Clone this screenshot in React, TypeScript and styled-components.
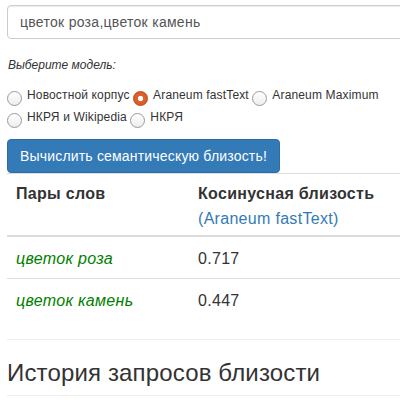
import React from "react";
import styled, { createGlobalStyle } from "styled-components";

const Global = createGlobalStyle`
  html, body { margin: 0; padding: 0; overflow: hidden; background: #fff; }
  body {
    font-family: "Liberation Sans", Arial, Helvetica, sans-serif;
    font-size: 14px;
    line-height: 1.42857;
    color: #333;
  }
  * { box-sizing: border-box; }
`;

const Page = styled.div`
  width: 440px;
  padding: 5px 0 0 7px;
`;

const TextInput = styled.input`
  display: block;
  width: 100%;
  height: 34px;
  padding: 6px 12px;
  font-family: inherit;
  font-size: 14px;
  letter-spacing: 0.28px;
  line-height: 20px;
  color: #555;
  background: #fff;
  border: 1px solid #ccc;
  border-radius: 4px;
  box-shadow: inset 0 1px 1px rgba(0, 0, 0, 0.075);
  outline: none;
`;

const Hint = styled.div`
  margin-top: 18px;
  padding-left: 1px;
  font-size: 12px;
  line-height: 17px;
  font-style: italic;
  color: #333;
`;

const RadioGroup = styled.div`
  margin-top: 10px;
  font-size: 12px;
  line-height: 22px;
  letter-spacing: 0.15px;
`;

const Option = styled.label`
  white-space: nowrap;
  color: #333;
`;

const Radio = styled.span<{ $checked?: boolean }>`
  display: inline-block;
  width: 15px;
  height: 15px;
  margin: 0 5px 0 0;
  vertical-align: -7px;
  border-radius: 50%;
  border: 1px solid ${(p) => (p.$checked ? "#b9481b" : "#9a9a9a")};
  background: ${(p) =>
    p.$checked
      ? "radial-gradient(circle at 50% 50%, #fff 0 2.3px, #e3612c 3px, #d45522 100%)"
      : "linear-gradient(#ffffff, #ededed)"};
`;

const Button = styled.button`
  display: block;
  margin-top: 11px;
  height: 34px;
  padding: 6px 12px;
  font-family: inherit;
  font-size: 14px;
  letter-spacing: 0.18px;
  line-height: 20px;
  color: #fff;
  background: #337ab7;
  border: 1px solid #2e6da4;
  border-radius: 4px;
`;

const Table = styled.table`
  width: 100%;
  border-collapse: collapse;
  font-size: 16px;
  line-height: 23px;
  letter-spacing: 0.3px;
  margin-bottom: 19px;
`;

const Th = styled.th<{ $w?: number }>`
  text-align: left;
  vertical-align: top;
  font-weight: bold;
  padding: 8px 8px 5px 9px;
  border-top: 1px solid #ddd;
  border-bottom: 2px solid #ddd;
  width: ${(p) => (p.$w ? `${p.$w}px` : "auto")};
`;

const Sub = styled.span`
  display: block;
  margin-top: 2px;
  font-weight: normal;
  color: #337ab7;
`;

const Td = styled.td<{ $pair?: boolean }>`
  padding: 10px 8px 8px 9px;
  border-bottom: 1px solid #ddd;
  vertical-align: top;
  color: ${(p) => (p.$pair ? "#008000" : "#333")};
  font-style: ${(p) => (p.$pair ? "italic" : "normal")};
`;

const LastTd = styled(Td)`
  border-bottom: none;
`;

const Rule = styled.hr`
  margin: 0;
  border: 0;
  border-top: 1px solid #eee;
`;

const Heading = styled.h3`
  margin: 20px 0 0 0;
  padding-bottom: 9px;
  font-size: 24px;
  letter-spacing: 0.15px;
  line-height: 26px;
  font-weight: 400;
  color: #333;
  border-bottom: 1px solid #eee;
`;

const models = [
  { name: "Новостной корпус", checked: false },
  { name: "Araneum fastText", checked: true },
  { name: "Araneum Maximum", checked: false },
  { name: "НКРЯ и Wikipedia", checked: false },
  { name: "НКРЯ", checked: false },
];

const rows = [
  { pair: "цветок роза", value: "0.717" },
  { pair: "цветок камень", value: "0.447" },
];

export default function App() {
  return (
    <>
      <Global />
      <Page>
        <TextInput defaultValue="цветок роза,цветок камень" />
        <Hint>Выберите модель:</Hint>
        <RadioGroup>
          {models.map((m, i) => (
            <React.Fragment key={m.name}>
              <Option>
                <Radio $checked={m.checked} />
                {m.name}
              </Option>
              {i < models.length - 1 ? " " : null}
            </React.Fragment>
          ))}
        </RadioGroup>
        <Button>Вычислить семантическую близость!</Button>
        <Table>
          <thead>
            <tr>
              <Th $w={182}>Пары слов</Th>
              <Th>
                Косинусная близость
                <Sub>(Araneum fastText)</Sub>
              </Th>
            </tr>
          </thead>
          <tbody>
            {rows.map((r, i) =>
              i < rows.length - 1 ? (
                <tr key={r.pair}>
                  <Td $pair>{r.pair}</Td>
                  <Td>{r.value}</Td>
                </tr>
              ) : (
                <tr key={r.pair}>
                  <LastTd $pair>{r.pair}</LastTd>
                  <LastTd>{r.value}</LastTd>
                </tr>
              )
            )}
          </tbody>
        </Table>
        <Rule />
        <Heading>История запросов близости</Heading>
      </Page>
    </>
  );
}
